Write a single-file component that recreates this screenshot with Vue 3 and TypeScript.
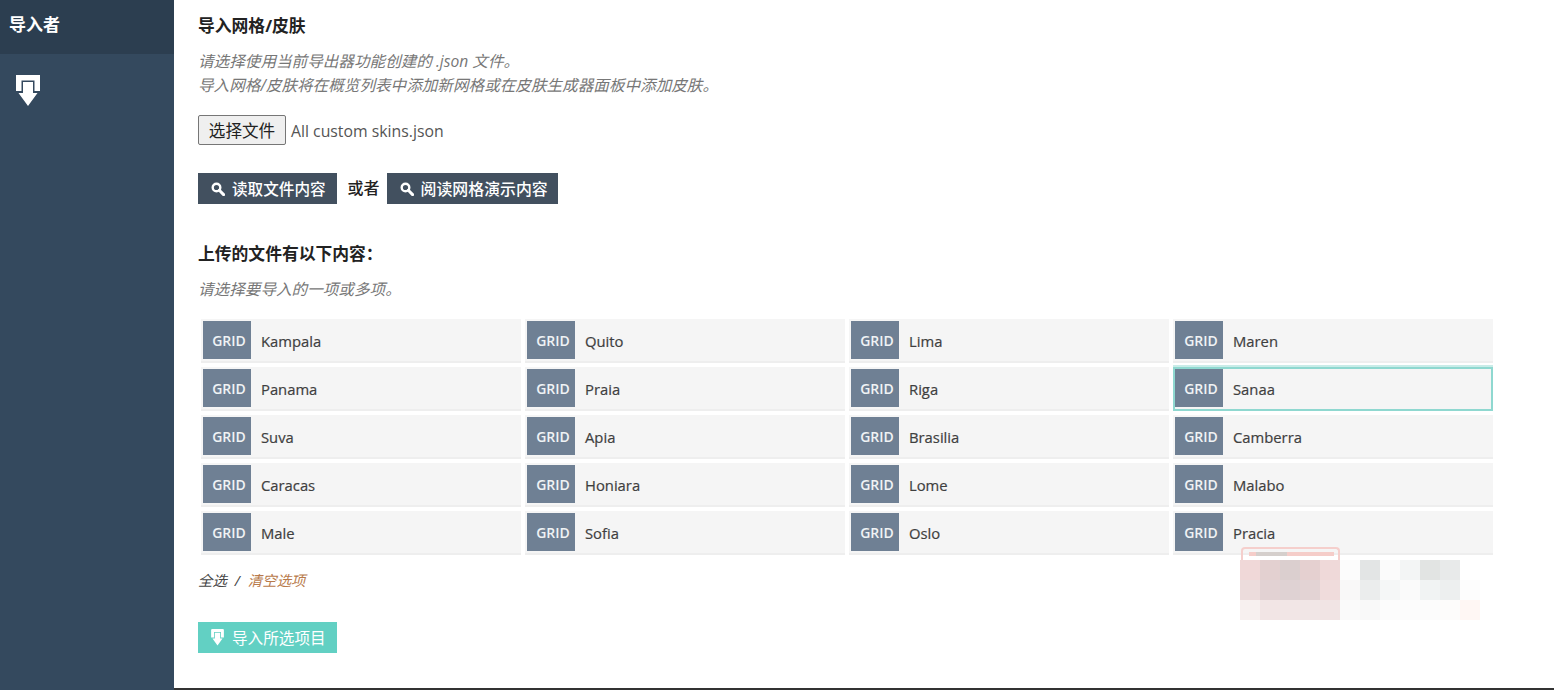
<script setup lang="ts">
const names: string[] = [
  'Kampala', 'Quito', 'Lima', 'Maren',
  'Panama', 'Praia', 'Riga', 'Sanaa',
  'Suva', 'Apia', 'Brasilia', 'Camberra',
  'Caracas', 'Honiara', 'Lome', 'Malabo',
  'Male', 'Sofia', 'Oslo', 'Pracia',
]
const blur: { x: number; y: number; c: string }[] = [
  ['#f0d8d8', '#e3d0d0', '#dbcfcf', '#e5d0d0', '#efd9d9', '#fcfcfc', '#e3e5e5', '#fbfbfb', '#f3f5f5', '#e2e4e3', '#e8eaea', '#ffffff'],
  ['#ecdcdc', '#e2d2d3', '#dfd2d3', '#e3d3d4', '#f0dcdc', '#f9f8f8', '#ebeded', '#f5f7f7', '#fafafa', '#f1f3f3', '#edefef', '#fdfdfd'],
  ['#f7f0ef', '#f2e5e5', '#f2e6e6', '#f1e6e6', '#f1e4e4', '#fafafa', '#f9f9f9', '#fcfcfc', '#fcfcfc', '#fcfcfc', '#fdfcfb', '#fff7f4'],
].flatMap((row, y) => row.map((c, x) => ({ x, y, c })))
</script>

<template>
  <div class="page">
    <aside class="side">
      <div class="side-head">导入者</div>
      <div class="side-icon">
        <svg width="24" height="32" viewBox="0 0 24 32">
          <path d="M0 0H24V16H18.500V5.500H5.500V16H0Z" fill="#fff" />
          <path d="M7 7H17V18H21.500L12 31L2.500 18H7Z" fill="#fff" />
        </svg>
      </div>
    </aside>
    <main class="main">
      <h3 class="title first">导入网格/皮肤</h3>
      <p class="hint intro">请选择使用当前导出器功能创建的 .json 文件。<br />导入网格/皮肤将在概览列表中添加新网格或在皮肤生成器面板中添加皮肤。</p>
      <div class="file-row">
        <button class="file-btn" type="button">选择文件</button>
        <span class="file-name">All custom skins.json</span>
      </div>
      <div class="actions">
        <button class="btn dark" type="button">
          <svg width="14" height="14" viewBox="0 0 14 14"><circle cx="5.500" cy="5.500" r="3.800" fill="none" stroke="#fff" stroke-width="2.400" /><path d="M8.300 8.300L12.600 12.600" stroke="#fff" stroke-width="3" stroke-linecap="round" /></svg>
          读取文件内容
        </button>
        <span class="or">或者</span>
        <button class="btn dark wide" type="button">
          <svg width="14" height="14" viewBox="0 0 14 14"><circle cx="5.500" cy="5.500" r="3.800" fill="none" stroke="#fff" stroke-width="2.400" /><path d="M8.300 8.300L12.600 12.600" stroke="#fff" stroke-width="3" stroke-linecap="round" /></svg>
          阅读网格演示内容
        </button>
      </div>
      <h3 class="title second">上传的文件有以下内容：</h3>
      <p class="hint pick">请选择要导入的一项或多项。</p>
      <div class="grid">
        <div v-for="n in names" :key="n" class="item" :class="{ focus: n === 'Sanaa' }">
          <span class="tag">GRID</span>
          <span class="name">{{ n }}</span>
        </div>
      </div>
      <div class="links">
        <span class="all">全选</span>
        <span class="slash">/</span>
        <span class="clear">清空选项</span>
      </div>
      <button class="btn teal" type="button">
        <svg width="13" height="17" viewBox="0 0 24 32">
          <path d="M0 2Q0 0 2 0H22Q24 0 24 2V16H18.500V5.500H5.500V16H0Z" fill="#fff" />
          <path d="M7 7H17V18H21.500L12 31L2.500 18H7Z" fill="#fff" />
        </svg>
        导入所选项目
      </button>
    </main>
    <div class="stamp" aria-hidden="true"></div>
    <div class="mosaic" aria-hidden="true">
      <i v-for="b in blur" :key="`${b.x}-${b.y}`" :style="{ background: b.c }"></i>
    </div>
    <div class="rule"></div>
  </div>
</template>

<style>
html, body { margin: 0; background: #fff; }
</style>

<style scoped>
.page {
  position: relative;
  display: flex;
  width: 1554px;
  height: 690px;
  overflow: hidden;
  background: #fff;
  font-family: "Open Sans", "Noto Sans CJK SC", sans-serif;
  color: #222;
}
.side { width: 174px; flex: none; background: #34495e; }
.side-head {
  height: 54px;
  box-sizing: border-box;
  padding: 13px 0 0 9px;
  background: #2c3e50;
  color: #fff;
  font-size: 17px;
  font-weight: 700;
  line-height: 24px;
}
.side-icon { padding: 21px 0 0 16px; line-height: 0; }
.main { flex: 1; padding: 0 0 0 24px; min-width: 0; }
.title { margin: 0; font-size: 16.800px; font-weight: 700; line-height: 22px; color: #222; }
.title.first { padding-top: 15px; }
.title.second { margin-top: 39px; }
.hint { margin: 0; font-size: 15.600px; line-height: 24px; font-style: italic; color: #777; }
.intro { margin-top: 12px; }
.pick { margin-top: 12px; }
.file-row { display: flex; align-items: center; margin-top: 18px; height: 30px; }
.file-btn {
  width: 88px;
  height: 30px;
  padding: 0;
  border: 1px solid #767676;
  border-radius: 2px;
  background: #efefef;
  color: #222;
  font: 16.600px "Noto Sans CJK SC", sans-serif;
}
.file-name { margin: 1px 0 0 5px; font-size: 15.800px; color: #555; }
.actions { display: flex; align-items: center; margin-top: 28px; }
.or { margin: -3px 7px 0 11px; font-size: 16px; font-weight: 500; color: #222; }
.btn {
  display: inline-flex;
  align-items: center;
  gap: 7px;
  height: 31px;
  padding: 0 11px 0 13px;
  border: 0;
  color: #fff;
  font: 500 15.600px/31px "Noto Sans CJK SC", sans-serif;
}
.btn.dark { background: #42505f; }
.btn.wide { font-size: 15.900px; padding-right: 10px; }
.btn.teal { width: 139px; gap: 8px; padding: 0 0 0 13px; background: #62d0c3; margin-top: 30px; font-weight: 400; }
.grid {
  display: grid;
  grid-template-columns: repeat(4, 320px);
  column-gap: 4px;
  row-gap: 4px;
  margin: 18px 0 0 3px;
}
.item {
  display: flex;
  align-items: center;
  box-sizing: border-box;
  height: 44px;
  padding: 2px;
  background: #f5f5f5;
  border-bottom: 2px solid #eeeeee;
}
.item.focus {
  border-bottom-color: #8fd8d0;
  box-shadow: inset 2px 2px 0 #8fd8d0, inset -2px 0 0 #8fd8d0, 0 -2px 0 #c9ece8;
}
.tag {
  flex: none;
  width: 48px;
  height: 38px;
  box-sizing: border-box;
  padding-left: 4px;
  background: #6f8094;
  color: #f0f3f5;
  font-size: 14px;
  font-weight: 600;
  line-height: 40px;
  text-align: center;
}
.name {
  margin: 2px 0 0 10px;
  font-size: 14.800px;
  font-weight: 500;
  color: #3f3f3f;
  -webkit-text-stroke: 0.2px #3f3f3f;
}
.links { display: flex; margin-top: 15px; font-size: 14.400px; font-style: italic; line-height: 22px; }
.all { color: #444; }
.slash { margin: 0 8px; color: #444; }
.clear { color: #b87a4b; }
.stamp {
  position: absolute;
  left: 1241px;
  top: 547px;
  width: 99px;
  height: 14px;
  box-sizing: border-box;
  border: 2px solid #f5cfcc;
  border-bottom: 0;
  border-radius: 4px 4px 0 0;
}
.stamp::after {
  content: "";
  position: absolute;
  left: 6px;
  right: 4px;
  top: 3px;
  height: 4px;
  background: linear-gradient(90deg, #f5cdc9 0 8%, #d5cfcc 8% 45%, #f5cdc9 45% 100%);
}
.mosaic {
  position: absolute;
  left: 1240px;
  top: 560px;
  display: grid;
  grid-template-columns: repeat(12, 20px);
  grid-auto-rows: 20px;
}
.rule { position: absolute; left: 174px; right: 0; bottom: 0; height: 2px; background: #333; }
</style>
